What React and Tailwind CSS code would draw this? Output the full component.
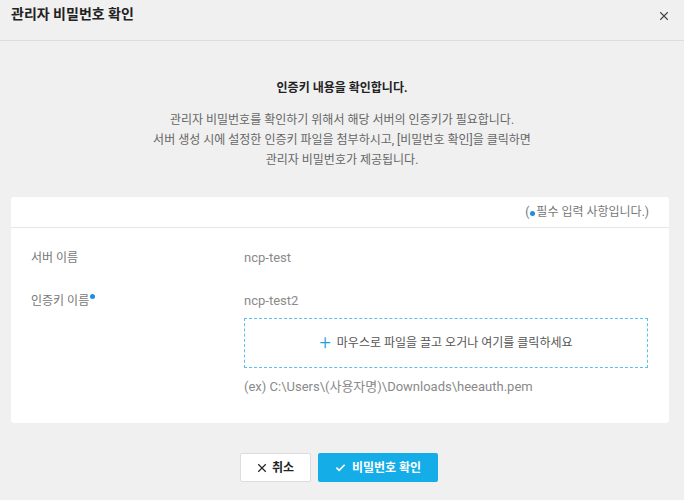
import React from 'react';

const font = { fontFamily: "Roboto, 'Noto Sans CJK KR', sans-serif" };

const XIcon = ({ className }) => (
  <svg viewBox="0 0 12 12" className={className} fill="none" stroke="currentColor" strokeWidth="1.4">
    <path d="M1.5 1.5l9 9M10.5 1.5l-9 9" />
  </svg>
);

const CheckIcon = ({ className }) => (
  <svg viewBox="0 0 12 12" className={className} fill="none" stroke="currentColor" strokeWidth="1.8">
    <path d="M1.5 6.2l3 3 6-6.2" />
  </svg>
);

const Dot = () => <span className="inline-block w-[5px] h-[5px] rounded-full bg-[#1a8fe3] align-top mt-[2px] mx-[1px]" />;

export default function App() {
  return (
    <div className="w-[684px] h-[500px] bg-[#f0f0f0] text-[#333] flex flex-col" style={font}>
      {/* Header */}
      <div className="h-[41px] shrink-0 flex items-center justify-between pl-[11px] pr-[15px] border-b border-[#dcdcdc]">
        <h1 className="text-[14px] font-bold text-[#222] -mt-[11px]">관리자 비밀번호 확인</h1>
        <button className="text-[#444] -mt-[9px]">
          <XIcon className="w-[10px] h-[10px]" />
        </button>
      </div>

      {/* Intro */}
      <div className="flex flex-col items-center text-center pt-[38px]">
        <p className="text-[12px] font-bold text-[#222] leading-[18px]">인증키 내용을 확인합니다.</p>
        <p className="mt-[13px] text-[12px] text-[#666] leading-[20px]">
          관리자 비밀번호를 확인하기 위해서 해당 서버의 인증키가 필요합니다.
          <br />
          서버 생성 시에 설정한 인증키 파일을 첨부하시고, [비밀번호 확인]을 클릭하면
          <br />
          관리자 비밀번호가 제공됩니다.
        </p>
      </div>

      {/* Form card */}
      <div className="mt-[27px] ml-[11px] w-[658px] h-[226px] bg-white rounded-[3px] flex flex-col">
        <div className="h-[31px] border-b border-[#e6e6e6] flex items-center justify-end pr-[20px] text-[12px] text-[#777]">
          (<Dot />필수 입력 사항입니다.)
        </div>
        <div className="flex px-[20px] pt-[21px] text-[12px]">
          <div className="w-[213px] text-[#777]">서버 이름</div>
          <div className="text-[#8a8a8a] text-[13px] -mt-[1px]">ncp-test</div>
        </div>
        <div className="flex px-[20px] pt-[24px] text-[12px]">
          <div className="w-[213px] text-[#777]">
            인증키 이름
            <Dot />
          </div>
          <div className="flex flex-col">
            <div className="text-[#8a8a8a] text-[13px] -mt-[1px]">ncp-test2</div>
            <div className="mt-[8px] w-[404px] h-[50px] border border-dashed border-[#5bc0eb] flex items-center justify-center gap-[6px] text-[12px] text-[#555] cursor-pointer">
              <span className="text-[#1a9fe0] text-[20px] font-light leading-none -mt-[2px]">+</span>
              마우스로 파일을 끌고 오거나 여기를 클릭하세요
            </div>
            <div className="mt-[9px] text-[13px] text-[#8a8a8a]">(ex) C:\Users\(사용자명)\Downloads\heeauth.pem</div>
          </div>
        </div>
      </div>

      {/* Buttons */}
      <div className="flex justify-center gap-[7px] mt-[30px] pr-[6px]">
        <button className="w-[71px] h-[29px] bg-white border border-[#ddd] rounded-[2px] flex items-center justify-center gap-[5px] text-[12px] font-bold text-[#222]">
          <XIcon className="w-[10px] h-[10px]" />
          취소
        </button>
        <button className="w-[120px] h-[29px] bg-[#15ade8] rounded-[2px] flex items-center justify-center gap-[6px] text-[12px] font-bold text-white">
          <CheckIcon className="w-[11px] h-[11px]" />
          비밀번호 확인
        </button>
      </div>
    </div>
  );
}
